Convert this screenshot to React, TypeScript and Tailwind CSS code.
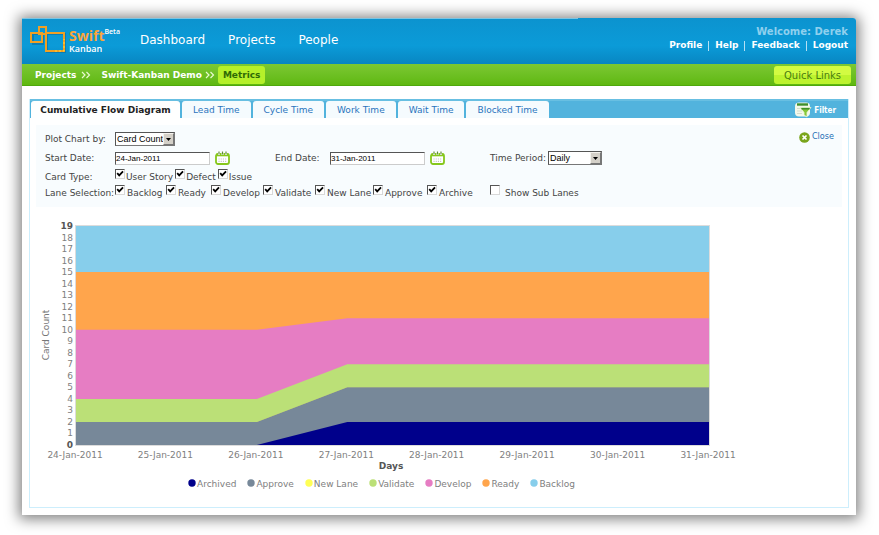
import React from "react";

const dates = [24, 25, 26, 27, 28, 29, 30, 31].map((d) => `${d}-Jan-2011`);

// Cumulative tops of each stacked band, one value per day.
const bands = [
  { name: "Backlog", color: "#87ceeb", tops: [19, 19, 19, 19, 19, 19, 19, 19] },
  { name: "Ready", color: "#ffa54c", tops: [15, 15, 15, 15, 15, 15, 15, 15] },
  { name: "Develop", color: "#e67dc3", tops: [10, 10, 10, 11, 11, 11, 11, 11] },
  { name: "Validate", color: "#bbe077", tops: [4, 4, 4, 7, 7, 7, 7, 7] },
  { name: "New Lane", color: "#ffff55", tops: [2, 2, 2, 5, 5, 5, 5, 5] },
  { name: "Approve", color: "#778899", tops: [2, 2, 2, 5, 5, 5, 5, 5] },
  { name: "Archived", color: "#00008b", tops: [0, 0, 0, 2, 2, 2, 2, 2] },
];

const PLOT = { left: 46, top: 19, width: 633, height: 219, max: 19 };
const px = (i: number) => PLOT.left + (i * PLOT.width) / 7;
const py = (v: number) => PLOT.top + PLOT.height * (1 - v / PLOT.max);

function Logo() {
  return (
    <div className="flex w-[110px] items-start">
      <svg width="36" height="28" viewBox="0 0 36 28" fill="none" aria-hidden="true">
        <g stroke="#0a6fa3" strokeWidth="2" opacity=".6">
          <rect x="3" y="9" width="10" height="10" />
          <rect x="17" y="9" width="18" height="18" />
        </g>
        <g stroke="#f0a024" strokeWidth="2">
          <rect x="9" y="2" width="7" height="7" />
          <rect x="1" y="8" width="11" height="9" />
          <rect x="16" y="8" width="18" height="18" />
        </g>
        <path d="M25 26h9V14" stroke="#ffd83a" strokeWidth="1" strokeDasharray="2 2" />
      </svg>
      <div className="ml-[3px] pt-[3px] font-['Open_Sans',sans-serif]">
        <div className="flex items-start text-[14px] leading-4 font-bold text-[#fba63a]">
          Swift
          <span className="text-[7px] leading-[7px] font-semibold text-white">Beta</span>
        </div>
        <div className="text-[9px] leading-[10px] font-semibold text-white">Kanban</div>
      </div>
    </div>
  );
}

function Chevrons() {
  return (
    <svg width="10" height="8" viewBox="0 0 10 8" fill="none" stroke="#e9f9cf" strokeWidth="1.2" aria-hidden="true">
      <path d="M1 1l3 3-3 3M5.500 1l3 3-3 3" />
    </svg>
  );
}

function CalendarButton({ label }: { label: string }) {
  return (
    <button type="button" aria-label={label} className="ml-[5px]">
      <svg width="15" height="14" viewBox="0 0 15 14" fill="none" aria-hidden="true">
        <rect x="1" y="3" width="13" height="10" rx="2" fill="#fff" stroke="#86c71c" strokeWidth="1.8" />
        <path d="M1 4h13" stroke="#86c71c" strokeWidth="2.6" />
        <path d="M4 0v4M7.5 0v4M11 0v4" stroke="#fff" strokeWidth="2" />
        <path d="M4 .5v3M7.5 .5v3M11 .5v3" stroke="#5f8a3a" strokeWidth="1.2" />
        <path d="M3.5 8h8M3.5 10.3h8" stroke="#c3c6be" strokeWidth="1.2" strokeDasharray="1.1 1.1" />
      </svg>
    </button>
  );
}

function SunkenSelect({ id, options, width }: { id: string; options: string[]; width: string }) {
  return (
    <div
      className={`grid h-[14px] items-center border border-t-[#555] border-l-[#555] border-r-[#777] border-b-[#777] bg-white ${width}`}
    >
      <select
        id={id}
        className="col-start-1 row-start-1 h-3 w-full appearance-none bg-transparent pl-px font-['Liberation_Sans',sans-serif] text-[9px] leading-3 text-black outline-none"
      >
        {options.map((o) => (
          <option key={o}>{o}</option>
        ))}
      </select>
      <span className="pointer-events-none col-start-1 row-start-1 flex h-3 w-[11px] items-center justify-center justify-self-end border border-[#f5f3ee] border-r-[#777] border-b-[#777] bg-[#d4d0c8]">
        <svg width="5" height="3" viewBox="0 0 5 3" aria-hidden="true">
          <path d="M0 0h5L2.5 3z" fill="#000" />
        </svg>
      </span>
    </div>
  );
}

function DateField({ id, value, pick }: { id: string; value: string; pick: string }) {
  return (
    <div className="flex w-[160px] items-center">
      <input
        id={id}
        type="text"
        defaultValue={value}
        className="h-[13px] w-[95px] border border-t-[#555] border-l-[#555] border-r-[#ccc] border-b-[#ccc] bg-white font-['Liberation_Sans',sans-serif] text-[8px] leading-[11px] text-black outline-none"
      />
      <CalendarButton label={pick} />
    </div>
  );
}

function Check({ label, checked = true, gap = "gap-0.5" }: { label: string; checked?: boolean; gap?: string }) {
  return (
    <label className={`flex items-start whitespace-nowrap leading-4 ${gap}`}>
      <span className="grid">
        <input
          type="checkbox"
          defaultChecked={checked}
          className="peer col-start-1 row-start-1 size-[10px] appearance-none border border-t-[#555] border-l-[#555] border-r-[#d8d8d8] border-b-[#d8d8d8] bg-white"
        />
        <svg
          className="pointer-events-none invisible col-start-1 row-start-1 peer-checked:visible"
          width="10"
          height="10"
          viewBox="0 0 10 10"
          fill="none"
          aria-hidden="true"
        >
          <path d="M2.200 4.200l2 2.200 3.800-4" stroke="#000" strokeWidth="1.8" />
        </svg>
      </span>
      {label}
    </label>
  );
}

function Filters() {
  return (
    <form className="mx-1.5 mt-[7px] flex justify-between bg-[#f8fcfe] pt-[7px] pr-2 pb-1.5 pl-[9px] text-[9px] text-[#444]">
      <div>
        <div className="flex h-[14px] items-center">
          <label htmlFor="plot" className="w-[70px] pt-0.5">Plot Chart by:</label>
          <SunkenSelect id="plot" options={["Card Count"]} width="w-[60px]" />
        </div>
        <div className="mt-[5px] flex h-[14px] items-center">
          <label htmlFor="start" className="w-[70px] pt-0.5">Start Date:</label>
          <DateField id="start" value="24-Jan-2011" pick="Pick start date" />
          <label htmlFor="end" className="w-[55px] pt-0.5">End Date:</label>
          <DateField id="end" value="31-Jan-2011" pick="Pick end date" />
          <label htmlFor="period" className="w-[58px] pt-0.5">Time Period:</label>
          <SunkenSelect id="period" options={["Daily"]} width="w-[54px]" />
        </div>
        <div className="mt-1 flex h-4 leading-4">
          <span className="w-[70px]">Card Type:</span>
          <div className="flex gap-0.5">
            <Check label="User Story" gap="gap-px" />
            <Check label="Defect" gap="gap-px" />
            <Check label="Issue" gap="gap-px" />
          </div>
        </div>
        <div className="flex h-4 leading-4">
          <span className="w-[70px] whitespace-nowrap">Lane Selection:</span>
          <div className="grid grid-cols-[51px_45px_52px_52px_58px_54px_63px_auto]">
            {["Backlog", "Ready", "Develop", "Validate", "New Lane", "Approve", "Archive"].map((l) => (
              <Check key={l} label={l} />
            ))}
            <Check label="Show Sub Lanes" checked={false} gap="gap-[5px]" />
          </div>
        </div>
      </div>
      <button
        type="button"
        className="flex h-[10px] items-center gap-0.5 self-start font-['DejaVu_Sans_Condensed','DejaVu_Sans',sans-serif] text-[9px] text-[#1f6fb5]"
      >
        <svg width="11" height="11" viewBox="0 0 11 11" aria-hidden="true">
          <circle cx="5.5" cy="5.5" r="5.3" fill="#7aa51c" />
          <path d="M3.5 3.5l4 4M7.5 3.5l-4 4" stroke="#fff" strokeWidth="1.7" />
        </svg>
        Close
      </button>
    </form>
  );
}

function FlowChart() {
  return (
    <svg
      width="720"
      height="267"
      viewBox="0 0 720 267"
      className="block max-w-full font-['DejaVu_Sans',sans-serif] text-[9px]"
      role="img"
      aria-label="Cumulative flow of cards by day"
    >
      {bands.map((b) => (
        <polygon
          key={b.name}
          fill={b.color}
          points={[
            `${px(0)},${py(0)}`,
            ...b.tops.map((v, i) => `${px(i)},${py(v)}`),
            `${px(7)},${py(0)}`,
          ].join(" ")}
        />
      ))}
      <rect
        x={PLOT.left - 0.5}
        y={PLOT.top - 0.5}
        width={PLOT.width + 1}
        height={PLOT.height + 1}
        fill="none"
        stroke="#dcdcdc"
      />
      {Array.from({ length: 20 }, (_, v) => (
        <text
          key={v}
          x="43"
          y={py(v) + 3}
          textAnchor="end"
          fill={v === 0 || v === 19 ? "#555" : "#808080"}
          className={v === 0 || v === 19 ? "font-bold" : ""}
        >
          {v}
        </text>
      ))}
      {dates.map((d, i) => (
        <text key={d} x={px(i) - 1} y="251" textAnchor="middle" fill="#808080">
          {d}
        </text>
      ))}
      <text transform="translate(19 128) rotate(-90)" textAnchor="middle" fill="#777">
        Card Count
      </text>
      <text x="361" y="262" textAnchor="middle" fill="#555" className="font-bold">
        Days
      </text>
    </svg>
  );
}

const tabs = ["Lead Time", "Cycle Time", "Work Time", "Wait Time", "Blocked Time"];
const accountLinks = ["Profile", "Help", "Feedback", "Logout"];

export default function App() {
  return (
    <div className="bg-white pt-[18px] pr-[23px] pb-5 pl-[22px] font-['DejaVu_Sans',Verdana,sans-serif]">
      <div className="rounded-tr-[3px] bg-white shadow-[0_1px_14px_3px_rgba(0,0,0,0.5)]">
        <header className="rounded-tr-[3px] bg-linear-to-b from-[#0c93cf] via-[#0b9bd8] via-60% to-[#0886c2]">
          <div className="h-px w-2/3 bg-[#7cc4e2]" />
          <div className="flex h-[45px] justify-between pr-2 pl-2">
            <div className="flex items-start pt-[6px]">
              <Logo />
              <nav className="flex gap-[23px] pt-[7px] text-xs leading-4 text-white">
                <a href="#dashboard">Dashboard</a>
                <a href="#projects">Projects</a>
                <a href="#people">People</a>
              </nav>
            </div>
            <div className="flex flex-col items-end pt-1.5 text-white">
              <div className="text-[10px] leading-[14px] font-bold text-[#8fd0ee]">Welcome: Derek</div>
              <ul className="flex text-[9px] leading-[13px] font-bold">
                {accountLinks.map((l, i) => (
                  <li key={l} className="flex items-center">
                    {i > 0 && <span className="mx-1.5 h-[10px] w-px bg-[#b5e0f4]" />}
                    <a href={`#${l.toLowerCase()}`}>{l}</a>
                  </li>
                ))}
              </ul>
            </div>
          </div>
        </header>

        <div className="flex h-[22px] items-center justify-between border-b border-[#4fa80c] bg-linear-to-b from-[#7cc832] to-[#5fb80f] pr-[5px] pl-[13px]">
          <nav aria-label="Breadcrumb" className="flex items-center text-[9px] font-bold text-white">
            <a href="#projects" className="pt-0.5">Projects</a>
            <span className="mr-[10px] ml-[5px]"><Chevrons /></span>
            <a href="#demo" className="pt-0.5">Swift-Kanban Demo</a>
            <span className="mr-[3px] ml-[3px]"><Chevrons /></span>
            <a href="#metrics" className="rounded-[3px] bg-[#b5f02a] px-[5px] leading-[18px] text-[#2f6b05]">
              Metrics
            </a>
          </nav>
          <button
            type="button"
            className="h-[18px] w-[77px] rounded-[3px] bg-linear-to-b from-[#d2fb42] from-50% to-[#bdf32e] to-50% pt-px text-[10px] text-[#4a7d10]"
          >
            Quick Links
          </button>
        </div>

        <main className="px-[7px] pt-[13px] pb-[7px]">
          <section className="border border-t-0 border-[#cdeefc] pb-[15px]">
            <div className="flex items-end justify-between border-t-2 border-[#68bfe2] bg-[#52b3dd]">
              <div role="tablist" className="ml-px flex gap-0.5 text-[9px] leading-[15px]">
                <button type="button" role="tab" aria-selected="true" className="w-[149px] rounded-t-[3px] bg-white pt-0.5 font-bold whitespace-nowrap text-[#222]">
                  Cumulative Flow Diagram
                </button>
                {tabs.map((t) => (
                  <button
                    key={t}
                    type="button"
                    role="tab"
                    aria-selected="false"
                    className="rounded-t-[3px] bg-[#f5fbfe] px-[11px] pt-0.5 text-[#2a74bd]"
                  >
                    {t}
                  </button>
                ))}
              </div>
              <button
                type="button"
                className="mr-3 flex h-[17px] items-center gap-0.5 font-['DejaVu_Sans_Condensed','DejaVu_Sans',sans-serif] text-[8px] font-bold text-white"
              >
                <svg width="18" height="16" viewBox="0 0 18 16" aria-hidden="true">
                  <rect x="1" y="0.500" width="15" height="14" rx="4" fill="#f4f8ea" />
                  <path d="M3 2.500h11" stroke="#3f8f2a" strokeWidth="2.4" />
                  <path d="M3 6.500h4M3 9h5M3 11.500h5" stroke="#d5dccb" strokeWidth="1" />
                  <path d="M6 5.500h11l-4 5v4.500l-3-2v-2.500z" fill="#86c738" stroke="#eef7dc" strokeWidth=".8" />
                  <path d="M7.500 6.700h8" stroke="#3f8f2a" strokeWidth="1.6" />
                </svg>
                <span className="pt-0.5">Filter</span>
              </button>
            </div>
            <Filters />
            <FlowChart />
            <ul className="mt-0.5 ml-[158px] flex gap-[11px] text-[9px] leading-4 text-[#808080]">
              {[...bands].reverse().map((b) => (
                <li key={b.name} className="flex items-center gap-px">
                  <svg width="8" height="8" viewBox="0 0 8 8" className="mb-0.5" aria-hidden="true">
                    <circle cx="4" cy="4" r="3.700" fill={b.color} />
                  </svg>
                  {b.name}
                </li>
              ))}
            </ul>
          </section>
        </main>
      </div>
    </div>
  );
}
